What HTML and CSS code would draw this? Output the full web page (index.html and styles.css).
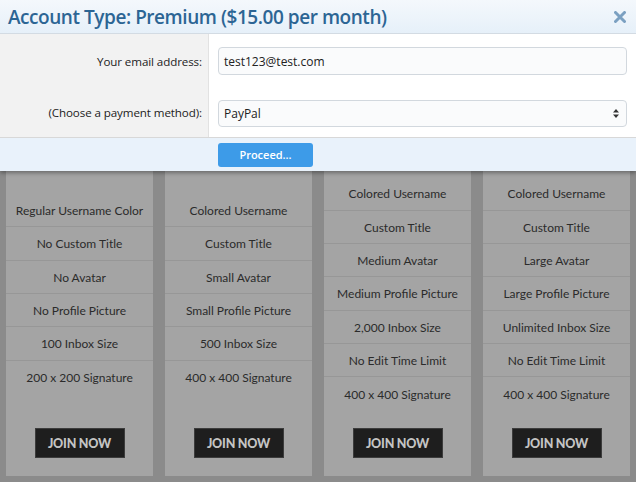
FILE: index.html
```html
<!DOCTYPE html>
<html>
<head>
<meta charset="utf-8">
<link rel="stylesheet" href="styles.css">
</head>
<body>
<div class="plans">
  <div class="card">
    <div class="card-head card-head--tall"></div>
    <ul class="features">
      <li>Regular Username Color</li>
      <li>No Custom Title</li>
      <li>No Avatar</li>
      <li>No Profile Picture</li>
      <li>100 Inbox Size</li>
      <li class="last">200 x 200 Signature</li>
    </ul>
    <a class="join">JOIN NOW</a>
  </div>
  <div class="card">
    <div class="card-head card-head--tall"></div>
    <ul class="features">
      <li>Colored Username</li>
      <li>Custom Title</li>
      <li>Small Avatar</li>
      <li>Small Profile Picture</li>
      <li>500 Inbox Size</li>
      <li class="last">400 x 400 Signature</li>
    </ul>
    <a class="join">JOIN NOW</a>
  </div>
  <div class="card">
    <div class="card-head"></div>
    <ul class="features">
      <li>Colored Username</li>
      <li>Custom Title</li>
      <li>Medium Avatar</li>
      <li>Medium Profile Picture</li>
      <li>2,000 Inbox Size</li>
      <li>No Edit Time Limit</li>
      <li class="last">400 x 400 Signature</li>
    </ul>
    <a class="join">JOIN NOW</a>
  </div>
  <div class="card">
    <div class="card-head"></div>
    <ul class="features">
      <li>Colored Username</li>
      <li>Custom Title</li>
      <li>Large Avatar</li>
      <li>Large Profile Picture</li>
      <li>Unlimited Inbox Size</li>
      <li>No Edit Time Limit</li>
      <li class="last">400 x 400 Signature</li>
    </ul>
    <a class="join">JOIN NOW</a>
  </div>
</div>

<div class="modal">
  <div class="modal-header">
    <h1 class="modal-title">Account Type: Premium ($15.00 per month)</h1>
    <svg class="close" width="12" height="12" viewBox="0 0 12 12"><path d="M1.5 1.5 L10.5 10.5 M10.5 1.5 L1.5 10.5" stroke="#7ba0c1" stroke-width="3" stroke-linecap="round"/></svg>
  </div>
  <div class="modal-body">
    <div class="labels">
      <label class="label">Your email address:</label>
      <label class="label">(Choose a payment method):</label>
    </div>
    <div class="fields">
      <div class="input">test123@test.com</div>
      <div class="select">
        <span>PayPal</span>
        <svg class="arrows" width="6" height="9" viewBox="0 0 6 9"><path d="M3 0 L6 3.5 H0 Z M0 5.5 H6 L3 9 Z" fill="#333"/></svg>
      </div>
    </div>
  </div>
  <div class="modal-footer">
    <button class="proceed">Proceed...</button>
  </div>
</div>
</body>
</html>
```

FILE: styles.css
```css
* { box-sizing: border-box; }
html, body { margin: 0; padding: 0; }
body {
  width: 636px;
  height: 482px;
  overflow: hidden;
  background: #8b8b8b;
  position: relative;
  font-family: Lato, "Liberation Sans", sans-serif;
}

.plans {
  display: grid;
  grid-template-columns: repeat(4, 147px);
  column-gap: 12px;
  padding: 0 6px;
  height: 476px;
}
.card {
  background: #a4a4a4;
  display: flex;
  flex-direction: column;
  align-items: center;
}
.card-head { height: 177.33px; width: 100%; }
.card-head--tall { height: 194px; }
.features {
  list-style: none;
  margin: 0;
  padding: 0;
  width: 100%;
}
.features li {
  height: 33.33px;
  border-bottom: 1px solid #979797;
  display: flex;
  align-items: center;
  justify-content: center;
  font-size: 12px;
  color: #2b2b2b;
  padding-top: 1px;
}
.features li.last { border-bottom: none; }
.join {
  margin-top: auto;
  margin-bottom: 18px;
  width: 90px;
  height: 30px;
  background: #1e1e1e;
  border: 1px solid #3c3c3c;
  color: #c4c4c4;
  font-weight: 900;
  font-size: 12.5px;
  display: flex;
  align-items: center;
  justify-content: center;
  letter-spacing: -0.2px;
}

.modal {
  position: absolute;
  top: 0;
  left: 0;
  width: 636px;
  background: #fff;
  box-shadow: 0 2px 4px rgba(0,0,0,0.35);
  font-family: "Open Sans", "Liberation Sans", sans-serif;
}
.modal-header {
  height: 34px;
  background: linear-gradient(#f4f8fc, #e6f0f9);
  border-bottom: 1px solid #d3dbe3;
  display: flex;
  align-items: center;
  justify-content: space-between;
  padding: 0 10px 0 8px;
}
.modal-title {
  margin: 0;
  font-size: 19px;
  font-weight: 600;
  color: #2c6594;
  letter-spacing: -0.45px;
}
.close { display: block; }
.modal-body {
  display: flex;
  height: 104px;
  border-bottom: 1px solid #d8d8d8;
}
.labels {
  width: 209px;
  background: #f2f2f2;
  border-right: 1px solid #e2e2e2;
  display: flex;
  flex-direction: column;
  align-items: flex-end;
  padding: 17px 6px 0 0;
  gap: 30px;
}
.label {
  font-size: 11.6px;
  color: #222;
  height: 21px;
  line-height: 21px;
  letter-spacing: -0.1px;
}
.fields {
  flex: 1;
  display: flex;
  flex-direction: column;
  padding: 13px 9px 0 9px;
  gap: 25px;
}
.input, .select {
  height: 27px;
  border: 1px solid #d2d8de;
  border-radius: 4px;
  background: #fafbfc;
  font-size: 12px;
  color: #222;
  display: flex;
  align-items: center;
  padding: 0 5px;
}
.input { height: 28px; }
.select { justify-content: space-between; padding-right: 7px; }
.arrows { display: block; }
.modal-footer {
  height: 33px;
  background: #e9f2fb;
  padding: 4px 0 0 218px;
}
.proceed {
  width: 95px;
  height: 24px;
  border: none;
  border-radius: 3px;
  background: #3d9be8;
  color: #fff;
  font-family: "Open Sans", "Liberation Sans", sans-serif;
  font-weight: 600;
  font-size: 11px;
  padding: 0;
}
```
